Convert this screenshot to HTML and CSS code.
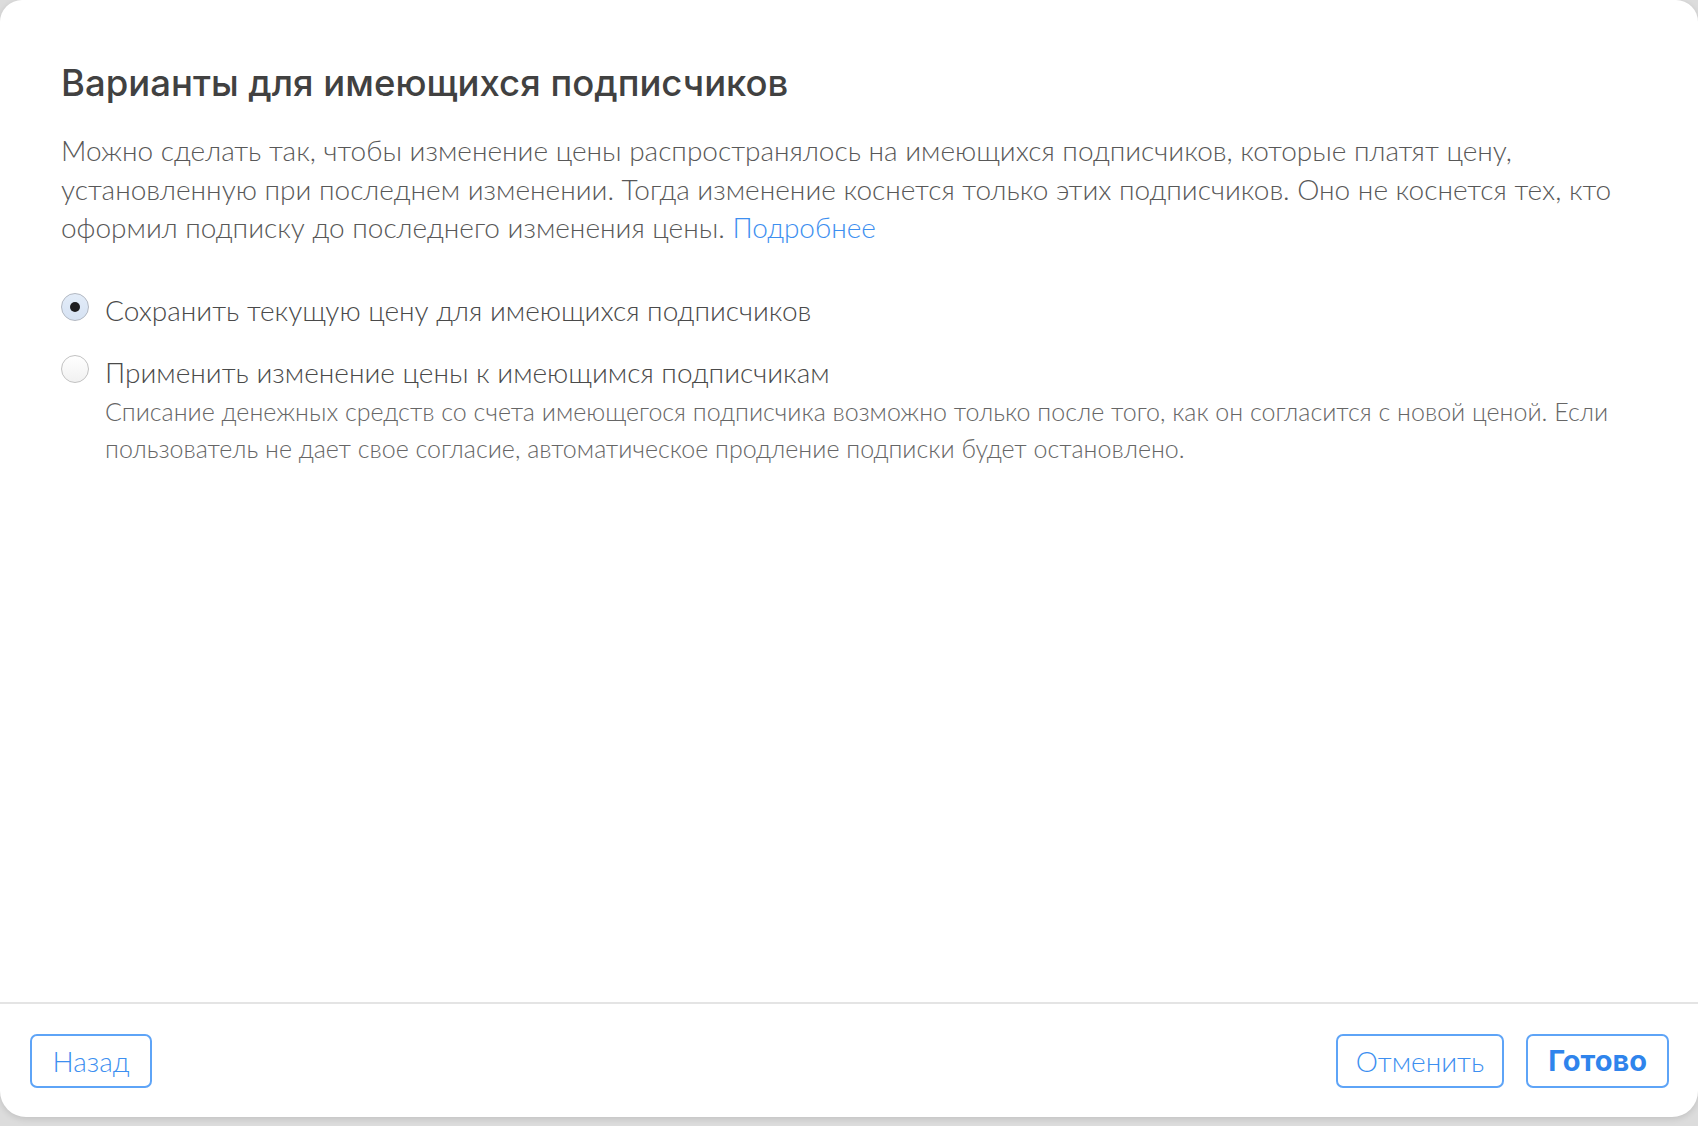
FILE: index.html
```html
<!DOCTYPE html>
<html lang="ru">
<head>
<meta charset="utf-8">
<title>Варианты для имеющихся подписчиков</title>
<link rel="stylesheet" href="styles.css">
</head>
<body>
<div class="dialog">
  <div class="content">
    <h1 class="title">Варианты для имеющихся подписчиков</h1>
    <p class="intro">Можно сделать так, чтобы изменение цены распространялось на имеющихся подписчиков, которые платят цену, установленную при последнем изменении. Тогда изменение коснется только этих подписчиков. Оно не коснется тех, кто оформил подписку до последнего изменения цены. <a class="link" href="#">Подробнее</a></p>
    <div class="options">
      <label class="option">
        <span class="radio radio-on"><span class="dot"></span></span>
        <span class="option-body">
          <span class="option-label">Сохранить текущую цену для имеющихся подписчиков</span>
        </span>
      </label>
      <label class="option">
        <span class="radio"></span>
        <span class="option-body">
          <span class="option-label">Применить изменение цены к имеющимся подписчикам</span>
          <span class="option-desc">Списание денежных средств со счета имеющегося подписчика возможно только после того, как он согласится с новой ценой. Если пользователь не дает свое согласие, автоматическое продление подписки будет остановлено.</span>
        </span>
      </label>
    </div>
  </div>
  <div class="footer">
    <button class="btn">Назад</button>
    <div class="footer-right">
      <button class="btn">Отменить</button>
      <button class="btn btn-primary">Готово</button>
    </div>
  </div>
</div>
</body>
</html>
```

FILE: styles.css
```css
* { box-sizing: border-box; }
html, body { margin: 0; padding: 0; }
body {
  width: 1698px;
  height: 1126px;
  background: #dcdcdc;
  font-family: Lato, Inter, "Liberation Sans", sans-serif;
  overflow: hidden;
}
.dialog {
  width: 1698px;
  height: 1117px;
  background: #fff;
  border-radius: 22px 22px 26px 26px;
  box-shadow: 0 2px 6px rgba(0,0,0,0.12);
  display: flex;
  flex-direction: column;
}
.content {
  flex: 1;
  padding: 59px 61px 0 61px;
}
.title {
  margin: 0;
  font-family: Inter, "Liberation Sans", sans-serif;
  font-size: 36.5px;
  line-height: 48px;
  font-weight: 500;
  color: #414141;
}
.intro {
  margin: 24px 0 0 0;
  font-size: 28px;
  line-height: 38.5px;
  font-weight: 300;
  color: #585858;
  max-width: 1580px;
}
.link {
  color: #3d8ff0;
  text-decoration: none;
}
.options {
  margin-top: 43px;
  display: flex;
  flex-direction: column;
  gap: 22px;
}
.option {
  display: flex;
  align-items: flex-start;
  gap: 16px;
}
.radio {
  flex: none;
  width: 28px;
  height: 28px;
  margin-top: 3px;
  border-radius: 50%;
  border: 1.5px solid #c2c2c2;
  background: linear-gradient(#fff, #f1f1f1);
  display: flex;
  align-items: center;
  justify-content: center;
}
.radio-on {
  border-color: #b2b8c2;
  background: linear-gradient(#e3ecf8, #d6e2f3);
}
.dot {
  width: 10px;
  height: 10px;
  border-radius: 50%;
  background: #1d1d1f;
}
.option-body {
  display: flex;
  flex-direction: column;
}
.option-label {
  font-size: 28px;
  line-height: 40px;
  font-weight: 300;
  color: #4a4a4a;
}
.option-desc {
  margin-top: 1px;
  font-size: 25px;
  line-height: 37px;
  font-weight: 300;
  color: #666;
}
.footer {
  flex: none;
  height: 115px;
  border-top: 2px solid #e4e4e4;
  display: flex;
  align-items: center;
  justify-content: space-between;
  padding: 0 29px 0 30px;
}
.footer-right {
  display: flex;
  gap: 22px;
}
.btn {
  height: 54px;
  padding: 0 18px;
  min-width: 122px;
  border: 2px solid #5ea4f7;
  border-radius: 7px;
  background: #fff;
  color: #3d8ff0;
  font-family: Lato, Inter, "Liberation Sans", sans-serif;
  font-size: 28px;
  font-weight: 300;
}
.btn-primary {
  font-family: Inter, "Liberation Sans", sans-serif;
  font-size: 29px;
  font-weight: 700;
  color: #2f84ec;
  padding: 0 20px;
}
```
